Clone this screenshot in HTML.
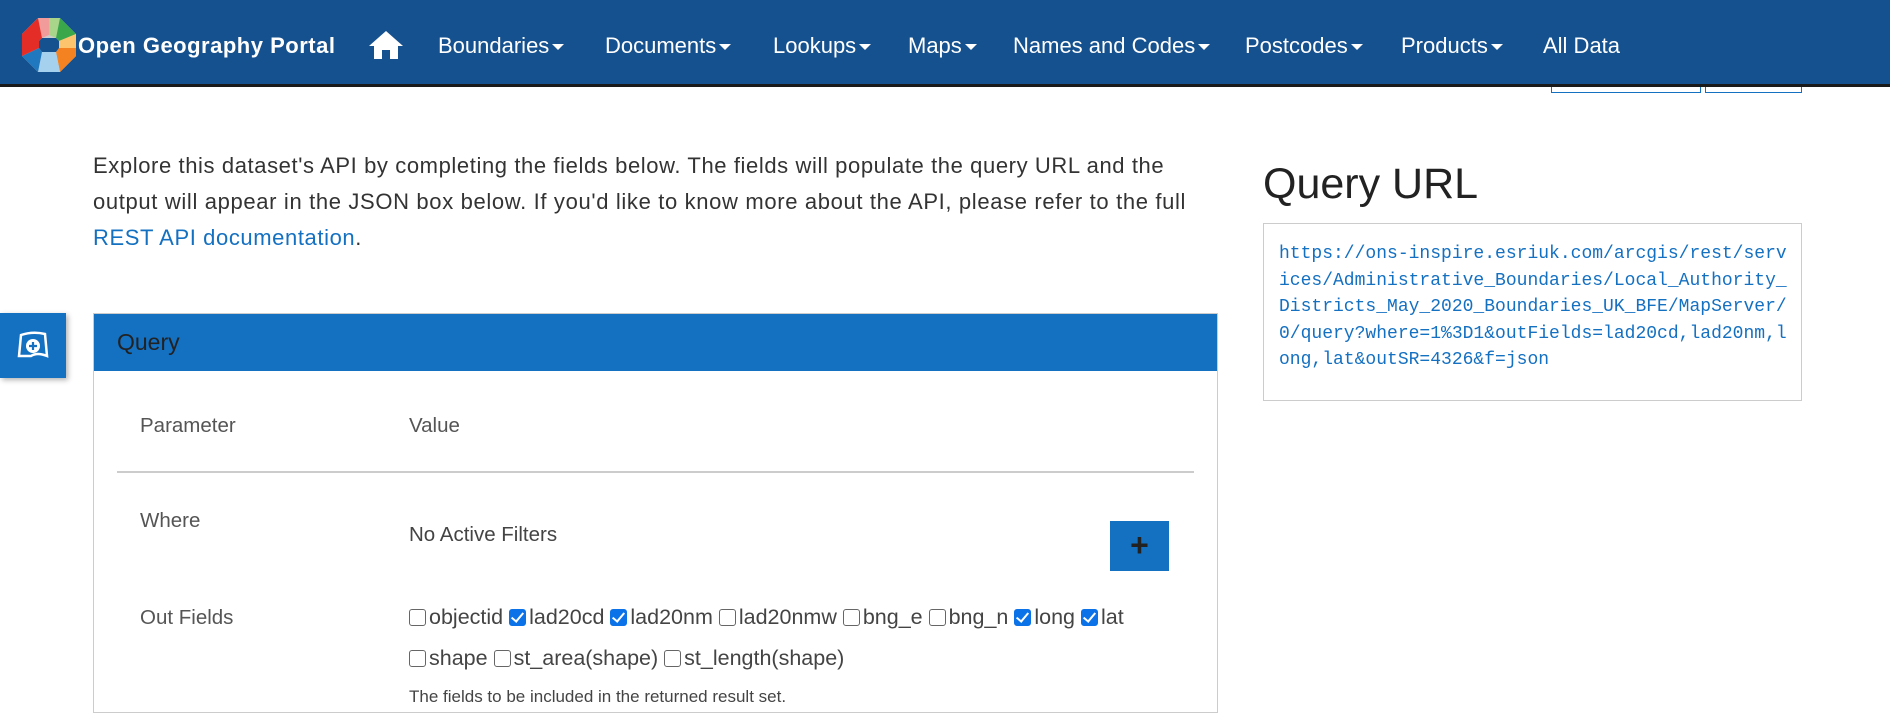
<!DOCTYPE html>
<html><head><meta charset="utf-8"><style>
*{box-sizing:border-box;margin:0;padding:0}
body{width:1890px;height:705px;overflow:hidden;background:#fff;font-family:"Liberation Sans",sans-serif;color:#333;position:relative}
.nav{position:absolute;left:0;top:0;width:1890px;height:87px;background:#16518f;border-bottom:3px solid #1a1a1a}
.nav .t{position:absolute;top:33px;color:#fff;font-size:22px;white-space:nowrap}
.car{display:inline-block;width:0;height:0;border-left:6px solid transparent;border-right:6px solid transparent;border-top:6px solid #fff;vertical-align:middle;margin-left:3px}
.abs{position:absolute;white-space:nowrap}
.cb{display:inline-block;width:17px;height:17px;border:1.5px solid #666;border-radius:3px;vertical-align:-2px;margin-right:3px;background:#fff}
.cb.on{background:#0b72e8;border-color:#0b72e8;position:relative}
.cb.on:after{content:"";position:absolute;left:4px;top:0px;width:5px;height:10px;border:solid #fff;border-width:0 2.5px 2.5px 0;transform:rotate(40deg)}
</style></head><body>
<div class="nav">
<svg style="position:absolute;left:22px;top:18px" width="54" height="54" viewBox="0 0 54 54">
<polygon points="16,0 38,0 54,16 54,38 38,54 16,54 0,38 0,16" fill="#ccc"/>
<polygon points="16,0 27,0 27,17 20,20" fill="#f29b9b"/>
<polygon points="27,0 38,0 34,20 27,17" fill="#a8d58a"/>
<polygon points="38,0 54,16 37,23 34,20" fill="#3aa84a"/>
<polygon points="54,16 54,30 37,30 37,23" fill="#fcc46c"/>
<polygon points="54,30 54,38 38,54 34,34 37,30" fill="#f58220"/>
<polygon points="38,54 16,54 20,34 34,34" fill="#a6d1ee"/>
<polygon points="16,54 0,38 17,30 20,34" fill="#2079bf"/>
<polygon points="0,38 0,16 16,0 20,20 17,23 17,30" fill="#e52d27"/>
<polygon points="20,20 34,20 37,23 37,30 34,34 20,34 17,30 17,23" fill="#16518f"/>
</svg>
<div class="t" style="left:78px;top:33px;font-weight:bold;font-size:22px;letter-spacing:0.5px">Open Geography Portal</div>
<svg style="position:absolute;left:368px;top:30px" width="36" height="30" viewBox="0 0 36 30"><path d="M18 1 L35 16 L30 16 L30 29 L22 29 L22 20 L14 20 L14 29 L6 29 L6 16 L1 16 Z" fill="#fff"/></svg>
<div class="t" style="left:438px">Boundaries<span class="car"></span></div>
<div class="t" style="left:605px">Documents<span class="car"></span></div>
<div class="t" style="left:773px">Lookups<span class="car"></span></div>
<div class="t" style="left:908px">Maps<span class="car"></span></div>
<div class="t" style="left:1013px">Names and Codes<span class="car"></span></div>
<div class="t" style="left:1245px">Postcodes<span class="car"></span></div>
<div class="t" style="left:1401px">Products<span class="car"></span></div>
<div class="t" style="left:1543px">All Data</div>
</div>
<div style="position:absolute;left:1551px;top:87px;width:150px;height:6px;border:1.5px solid #1470c1;border-top:none"></div>
<div style="position:absolute;left:1705px;top:87px;width:97px;height:6px;border:1.5px solid #1470c1;border-top:none"></div>

<div style="position:absolute;left:93px;top:148px;font-size:22px;line-height:36px;color:#333;white-space:nowrap;letter-spacing:0.6px">
<div>Explore this dataset's API by completing the fields below. The fields will populate the query URL and the</div>
<div style="letter-spacing:0.65px">output will appear in the JSON box below. If you'd like to know more about the API, please refer to the full</div>
<div style="color:#1470c1">REST API documentation<span style="color:#333">.</span></div>
</div>

<div class="abs" style="left:1263px;top:160px;font-size:43px;color:#222">Query URL</div>
<div style="position:absolute;left:1263px;top:223px;width:539px;height:178px;border:1px solid #ccc;"></div>
<div style="position:absolute;left:1279px;top:241px;width:512px;font-family:'Liberation Mono',monospace;font-size:18px;line-height:26.5px;color:#1470c1;word-break:break-all">https://ons-inspire.esriuk.com/arcgis/rest/services/Administrative_Boundaries/Local_Authority_Districts_May_2020_Boundaries_UK_BFE/MapServer/0/query?where=1%3D1&amp;outFields=lad20cd,lad20nm,long,lat&amp;outSR=4326&amp;f=json</div>

<div style="position:absolute;left:0;top:313px;width:66px;height:65px;background:#1470c1;box-shadow:2px 2px 5px rgba(0,0,0,.3)">
<svg style="position:absolute;left:17px;top:17px" width="32" height="30" viewBox="0 0 32 30"><path d="M4 5 Q16 1 28 4 L30 26 Q20 22 14 26 L2 26 Z" fill="none" stroke="#fff" stroke-width="2.5"/><circle cx="16" cy="16" r="7" fill="#fff"/><path d="M16 12v8M12 16h8" stroke="#1470c1" stroke-width="2.2"/></svg>
</div>

<div style="position:absolute;left:93px;top:313px;width:1125px;height:400px;border:1px solid #ccc">
<div style="height:57px;background:#1470c1;font-size:23px;color:#222;padding:15px 0 0 23px">Query</div>
</div>
<div class="abs" style="left:140px;top:414px;font-size:20.5px;color:#555">Parameter</div>
<div class="abs" style="left:409px;top:414px;font-size:20.5px;color:#555">Value</div>
<div style="position:absolute;left:117px;top:471px;width:1077px;height:2px;background:#ccc"></div>
<div class="abs" style="left:140px;top:509px;font-size:20.5px;color:#555">Where</div>
<div class="abs" style="left:409px;top:523px;font-size:20.5px;color:#444">No Active Filters</div>
<div style="position:absolute;left:1110px;top:521px;width:59px;height:50px;background:#1470c1;color:#222;font-size:32px;font-weight:bold;text-align:center;line-height:48px">+</div>
<div class="abs" style="left:140px;top:606px;font-size:20.5px;color:#555">Out Fields</div>
<div class="abs" style="left:409px;top:605px;font-size:21.5px;color:#444"><span class="cb"></span>objectid <span class="cb on"></span>lad20cd <span class="cb on"></span>lad20nm <span class="cb"></span>lad20nmw <span class="cb"></span>bng_e <span class="cb"></span>bng_n <span class="cb on"></span>long <span class="cb on"></span>lat</div>
<div class="abs" style="left:409px;top:646px;font-size:21.5px;color:#444"><span class="cb"></span>shape <span class="cb"></span>st_area(shape) <span class="cb"></span>st_length(shape)</div>
<div class="abs" style="left:409px;top:687px;font-size:17px;color:#444">The fields to be included in the returned result set.</div>
</body></html>
